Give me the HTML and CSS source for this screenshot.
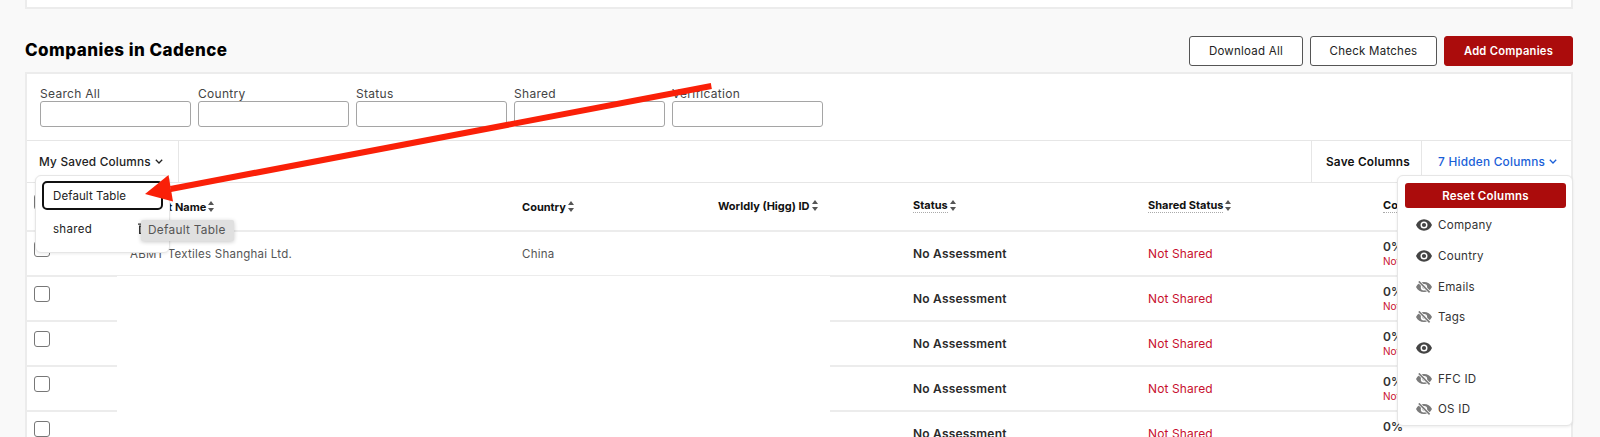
FILE: index.html
```html
<!DOCTYPE html>
<html lang="en">
<head>
<meta charset="utf-8">
<title>Companies in Cadence</title>
<link rel="stylesheet" href="styles.css">
</head>
<body>
<svg width="0" height="0" class="defs">
  <defs>
    <symbol id="eye" viewBox="0 0 16 12">
      <path fill-rule="evenodd" d="M0 6C1.6 2.4 4.500.3 8 .3s6.400 2.100 8 5.700c-1.600 3.600-4.500 5.700-8 5.700S1.600 9.600 0 6zm8-3.500a3.500 3.500 0 1 0 0 7 3.500 3.500 0 0 0 0-7z"/>
      <circle cx="8" cy="6" r="2.100"/>
    </symbol>
    <symbol id="eye-off" viewBox="0 0 16 12">
      <path fill-rule="evenodd" d="M0 6C1.600 2.800 4.500 1 8 1s6.400 1.800 8 5c-1.600 3.200-4.500 5-8 5S1.600 9.200 0 6zm8-3a3.200 3.200 0 1 0 0 6.400A3.200 3.200 0 0 0 8 3z"/>
      <circle cx="8" cy="6" r="1.700"/>
      <path d="M2.800.4 13.600 11.400" stroke="#fff" stroke-width="3"/>
      <path d="M2.800.4 13.600 11.400" stroke="currentColor" stroke-width="1.600"/>
    </symbol>
    <symbol id="sort" viewBox="0 0 6 11">
      <path d="M3 0 6 4H0zM3 11 0 7h6z"/>
    </symbol>
    <symbol id="chev" viewBox="0 0 8 5">
      <path d="M.8.8 4 4 7.200.8" fill="none" stroke="currentColor" stroke-width="1.300"/>
    </symbol>
  </defs>
</svg>

<div class="top-card"></div>

<header class="section-head">
  <h1 class="title">Companies in Cadence</h1>
  <div class="actions">
    <button class="btn btn-download">Download All</button>
    <button class="btn btn-check">Check Matches</button>
    <button class="btn btn-primary">Add Companies</button>
  </div>
</header>

<section class="card">
  <div class="filters">
    <label class="filter"><span>Search All</span><input class="field" type="text"></label>
    <label class="filter"><span>Country</span><input class="field" type="text"></label>
    <label class="filter"><span>Status</span><input class="field" type="text"></label>
    <label class="filter"><span>Shared</span><input class="field" type="text"></label>
    <label class="filter"><span>Verification</span><input class="field" type="text"></label>
  </div>

  <div class="toolbar">
    <div class="tool tool-saved">My Saved Columns <svg class="chev"><use href="#chev"/></svg></div>
    <div class="tool-space"></div>
    <div class="tool tool-save">Save Columns</div>
    <div class="tool tool-hidden">7 Hidden Columns <svg class="chev"><use href="#chev"/></svg></div>
  </div>

  <div class="row row-head">
    <div><span class="check"></span></div>
    <div class="th">Product Name <svg class="sort"><use href="#sort"/></svg></div>
    <div class="th">Country <svg class="sort"><use href="#sort"/></svg></div>
    <div class="th th-up">Worldly (Higg) ID <svg class="sort"><use href="#sort"/></svg></div>
    <div class="th th-up"><span class="dotted">Status</span> <svg class="sort"><use href="#sort"/></svg></div>
    <div class="th th-up"><span class="dotted">Shared Status</span> <svg class="sort"><use href="#sort"/></svg></div>
    <div class="th th-up"><span class="dotted">Completion</span></div>
  </div>

  <div class="row">
    <div><span class="check"></span></div>
    <div class="td">ABMT Textiles Shanghai Ltd.</div>
    <div class="td">China</div>
    <div></div>
    <div class="td-strong">No Assessment</div>
    <div class="td-red">Not Shared</div>
    <div class="pct"><span>0%</span><small>Not Verified</small></div>
  </div>
  <div class="row">
    <div><span class="check"></span></div><div></div><div></div><div></div>
    <div class="td-strong">No Assessment</div>
    <div class="td-red">Not Shared</div>
    <div class="pct"><span>0%</span><small>Not Verified</small></div>
  </div>
  <div class="row">
    <div><span class="check"></span></div><div></div><div></div><div></div>
    <div class="td-strong">No Assessment</div>
    <div class="td-red">Not Shared</div>
    <div class="pct"><span>0%</span><small>Not Verified</small></div>
  </div>
  <div class="row">
    <div><span class="check"></span></div><div></div><div></div><div></div>
    <div class="td-strong">No Assessment</div>
    <div class="td-red">Not Shared</div>
    <div class="pct"><span>0%</span><small>Not Verified</small></div>
  </div>
  <div class="row">
    <div><span class="check"></span></div><div></div><div></div><div></div>
    <div class="td-strong">No Assessment</div>
    <div class="td-red">Not Shared</div>
    <div class="pct"><span>0%</span><small>Not Verified</small></div>
  </div>
</section>

<div class="redaction"></div>

<div class="saved-menu">
  <div class="saved-item saved-active">Default Table</div>
  <div class="saved-item">shared
    <svg class="trash" viewBox="0 0 10 12"><path d="M0 1.500h10v1.300H0zM3 0h4v1.500H3zM1 3.500h8V12H1zm1.500 1.200v6h1.200v-6zm3.800 0v6h1.200v-6z" fill-rule="evenodd"/></svg>
  </div>
</div>

<div class="tooltip">Default Table</div>

<div class="hidden-menu">
  <button class="reset">Reset Columns</button>
  <ul class="col-list">
    <li><svg class="eye"><use href="#eye"/></svg>Company</li>
    <li><svg class="eye"><use href="#eye"/></svg>Country</li>
    <li><svg class="eye eye-muted"><use href="#eye-off"/></svg>Emails</li>
    <li><svg class="eye eye-muted"><use href="#eye-off"/></svg>Tags</li>
    <li><svg class="eye"><use href="#eye"/></svg></li>
    <li><svg class="eye eye-muted"><use href="#eye-off"/></svg>FFC ID</li>
    <li><svg class="eye eye-muted"><use href="#eye-off"/></svg>OS ID</li>
  </ul>
</div>

<svg class="arrow" viewBox="0 0 1600 437">
  <path d="M710.800 83 170 186l1.100 6L711.900 89z"/>
  <path d="M145 194 168.500 175 173 201.500z"/>
</svg>
</body>
</html>
```
FILE: styles.css
```css
* { box-sizing: border-box; }

html, body {
  margin: 0;
  height: 437px;
  overflow: hidden;
}

body {
  position: relative;
  padding: 0 27px 0 25px;
  background: #f9f9f9;
  color: #222;
  font-family: Inter, "Liberation Sans", sans-serif;
  font-size: 12px;
}

.defs { position: absolute; }

.top-card {
  height: 9px;
  background: #fff;
  border: 2px solid #ececec;
  border-top: 0;
}

.section-head {
  display: flex;
  align-items: center;
  justify-content: space-between;
  height: 30px;
  margin: 27px 0 6px;
}

.title {
  margin: 0 0 2px;
  color: #000;
  font-size: 17px;
  font-weight: 800;
  letter-spacing: .45px;
}

.actions { display: flex; gap: 7px; }

.btn {
  height: 30px;
  padding: 0;
  background: #fff;
  border: 1px solid #555;
  border-radius: 3px;
  color: #222;
  font: 400 11.500px Inter, "Liberation Sans", sans-serif;
  letter-spacing: .25px;
}

.btn-download { width: 114px; }
.btn-check { width: 127px; }

.btn-primary {
  width: 129px;
  background: #ab0c0c;
  border-color: #ab0c0c;
  color: #fff;
  font-size: 11.200px;
  font-weight: 600;
}

.card {
  height: 400px;
  background: #fff;
  border: 2px solid #ececec;
  border-bottom: 0;
}

.filters {
  display: flex;
  gap: 7px;
  height: 67px;
  padding: 13px 0 0 13px;
  border-bottom: 1px solid #e6e6e6;
}

.filter {
  display: flex;
  flex-direction: column;
  width: 151px;
  color: #444;
  font-size: 12px;
  letter-spacing: .3px;
  line-height: 14px;
}

.field {
  height: 26px;
  margin: 0;
  background: #fff;
  border: 1px solid #a5a5a5;
  border-radius: 3px;
}

.toolbar {
  display: flex;
  height: 42px;
  border-bottom: 1px solid #e6e6e6;
  font-size: 11.800px;
  font-weight: 500;
  letter-spacing: .2px;
}

.tool {
  display: flex;
  align-items: center;
  gap: 4px;
  white-space: nowrap;
}

.tool-saved {
  width: 152px;
  padding-left: 12px;
  border-right: 1px solid #e6e6e6;
}

.tool-space { flex: 1; }

.tool-save {
  width: 111px;
  padding-left: 14px;
  border-left: 1px solid #e6e6e6;
  border-right: 1px solid #e6e6e6;
  color: #111;
  font-weight: 600;
}

.tool-hidden {
  width: 149px;
  padding-left: 16px;
  color: #1a5fd8;
  letter-spacing: .25px;
}

.chev { width: 8px; height: 5px; }

.row {
  display: grid;
  grid-template-columns: 96px 392px 196px 195px 235px 235px 1fr;
  align-items: center;
  height: 45px;
  padding-left: 7px;
  border-bottom: 2px solid #ececec;
}

.row-head { height: 49px; }

.check {
  display: block;
  width: 16px;
  height: 16px;
  margin-top: -9px;
  border: 1.500px solid #777;
  border-radius: 3px;
}

.th {
  display: flex;
  align-items: center;
  gap: 2px;
  color: #111;
  font-size: 11px;
  font-weight: 700;
  white-space: nowrap;
}

.th-up { margin-top: -2px; }

.dotted { border-bottom: 1px dotted #aaa; }

.sort { width: 6px; height: 11px; fill: #555; }

.td {
  color: #555;
  font-size: 11.500px;
  letter-spacing: .25px;
  white-space: nowrap;
}

.td-strong {
  color: #2a2a2a;
  font-size: 12px;
  font-weight: 600;
  letter-spacing: .2px;
}

.td-red {
  color: #c8102e;
  font-size: 12px;
  letter-spacing: .1px;
}

.pct {
  display: flex;
  flex-direction: column;
  color: #333;
  font-size: 12px;
  font-weight: 600;
  line-height: 15px;
}

.pct small {
  color: #c8102e;
  font-size: 10px;
  font-weight: 400;
  white-space: nowrap;
}

.redaction {
  position: absolute;
  left: 117px;
  top: 276px;
  width: 713px;
  height: 161px;
  background: #fff;
}

.saved-menu {
  position: absolute;
  left: 35px;
  top: 175px;
  width: 135px;
  height: 78px;
  padding: 5px 6px;
  background: #fff;
  border: 1px solid #e6e6e6;
  border-radius: 6px;
  box-shadow: 0 1px 3px rgba(0, 0, 0, .08);
}

.saved-item {
  position: relative;
  display: flex;
  align-items: center;
  height: 29px;
  padding-left: 11px;
  color: #222;
  font-size: 11.500px;
  letter-spacing: .3px;
}

.saved-item + .saved-item { margin-top: 4px; }

.saved-active {
  padding-left: 9px;
  border: 2px solid #111;
  border-radius: 5px;
  letter-spacing: .1px;
}

.trash {
  position: absolute;
  left: 96px;
  top: 8px;
  width: 10px;
  height: 12px;
  fill: #333;
}

.tooltip {
  position: absolute;
  left: 141px;
  top: 220px;
  width: 93px;
  height: 21px;
  padding-left: 7px;
  background: #e0e0e0;
  border-radius: 2px;
  box-shadow: 0 1px 4px rgba(0, 0, 0, .22);
  color: #555;
  font-size: 11.800px;
  letter-spacing: .3px;
  line-height: 21px;
}

.hidden-menu {
  position: absolute;
  left: 1397px;
  top: 175px;
  width: 176px;
  height: 251px;
  padding: 7px 7px;
  background: #fff;
  border: 1px solid #e6e6e6;
  border-radius: 6px;
  box-shadow: 0 1px 3px rgba(0, 0, 0, .08);
}

.reset {
  display: block;
  width: 161px;
  height: 25px;
  padding: 0;
  background: #ab0c0c;
  border: 0;
  border-radius: 3px;
  color: #fff;
  font: 600 11.500px Inter, "Liberation Sans", sans-serif;
  letter-spacing: .25px;
}

.col-list {
  margin: 2px 0 0;
  padding: 0;
  list-style: none;
}

.col-list li {
  display: flex;
  align-items: center;
  gap: 6px;
  height: 30.700px;
  padding-left: 11px;
  color: #333;
  font-size: 11.600px;
  letter-spacing: .25px;
}

.eye { width: 16px; height: 12px; color: #444; fill: currentColor; }
.eye-muted { color: #7a7a7a; }

.arrow {
  position: absolute;
  left: 0;
  top: 0;
  width: 1600px;
  height: 437px;
  fill: #fa2008;
  pointer-events: none;
}
```
